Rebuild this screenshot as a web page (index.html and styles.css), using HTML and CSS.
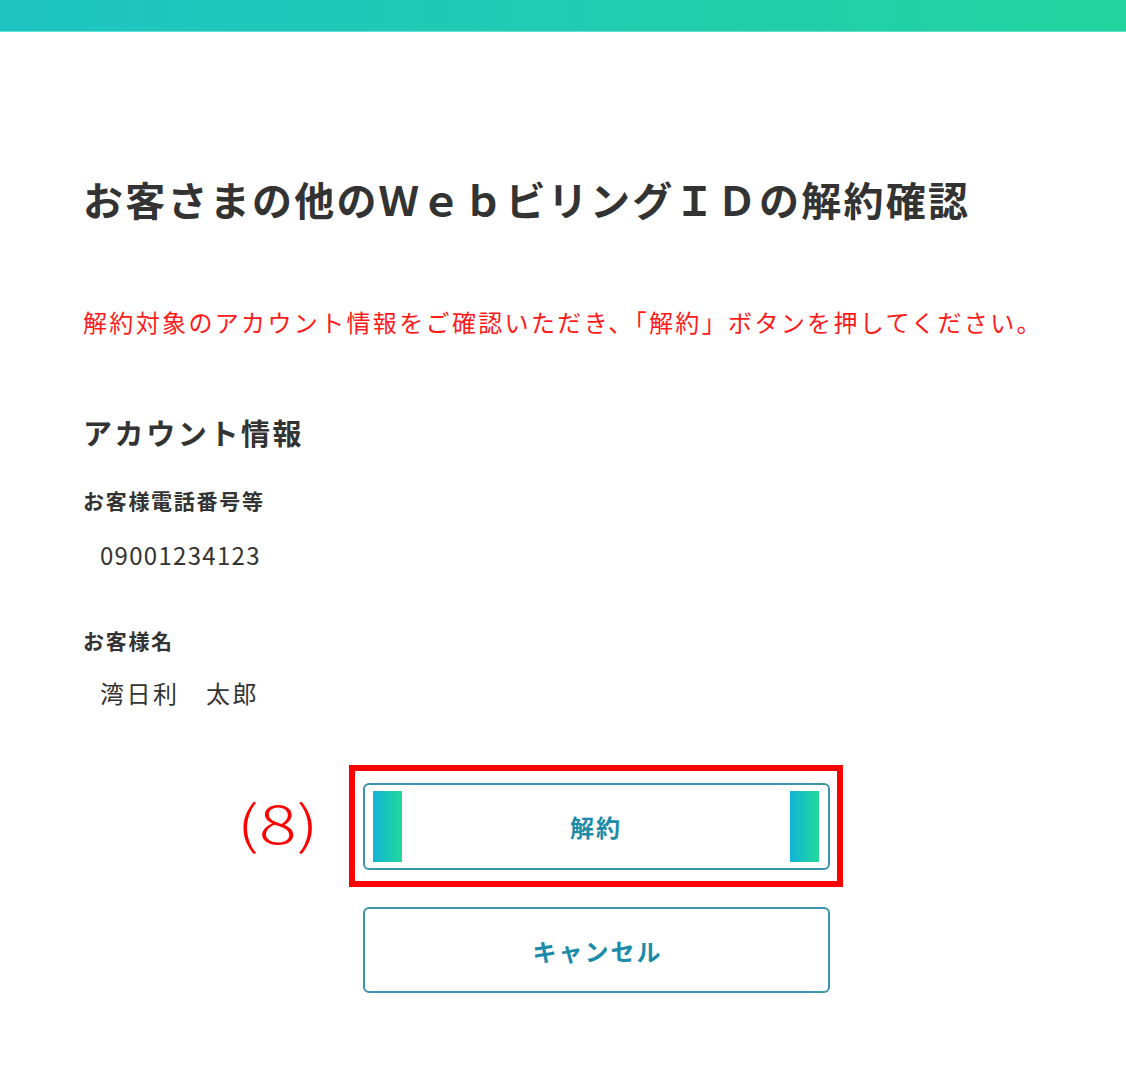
FILE: index.html
```html
<!DOCTYPE html>
<html lang="ja">
<head>
<meta charset="utf-8">
<title>お客さまの他のＷｅｂビリングＩＤの解約確認</title>
<link rel="stylesheet" href="styles.css">
</head>
<body>
<header class="topbar"></header>
<main class="page">
  <h1 class="title">お客さまの他のＷｅｂビリングＩＤの解約確認</h1>
  <p class="notice">解約対象のアカウント情報をご確認いただき、「解約」ボタンを押してください。</p>
  <section class="account">
    <h2 class="account-head">アカウント情報</h2>
    <dl class="fields">
      <dt class="field-label">お客様電話番号等</dt>
      <dd class="field-value field-value-num">09001234123</dd>
      <dt class="field-label field-label-gap">お客様名</dt>
      <dd class="field-value field-value-name">湾日利　太郎</dd>
    </dl>
  </section>
  <div class="actions">
    <div class="primary-wrap">
      <span class="annot-num">(8)</span>
      <button class="btn btn-primary" type="button">
        <span class="bar"></span>
        <span class="btn-label">解約</span>
        <span class="bar"></span>
      </button>
      <span class="annot-box"></span>
    </div>
    <button class="btn btn-cancel" type="button"><span class="btn-label">キャンセル</span></button>
  </div>
</main>
</body>
</html>
```

FILE: styles.css
```css
html, body {
  margin: 0;
  padding: 0;
  background: #ffffff;
}

body {
  font-family: "Noto Sans CJK JP", "Noto Sans", sans-serif;
  color: #333333;
}

.topbar {
  height: 31px;
  background: linear-gradient(90deg, #1dc4c2 0%, #20cdb0 55%, #22d49e 100%);
  border-bottom: 1px solid #5fe2d2;
}

.page {
  padding: 137px 16px 60px 83px;
}

.title {
  margin: 0;
  font-size: 40px;
  line-height: 60px;
  font-weight: 700;
  letter-spacing: 2.25px;
  color: #333333;
}

.notice {
  margin: 75px 0 0;
  font-size: 24px;
  line-height: 36px;
  font-weight: 400;
  letter-spacing: 2.35px;
  color: #ff1a1a;
}

.account {
  margin-top: 70px;
}

.account-head {
  margin: 0;
  font-size: 29px;
  line-height: 44px;
  font-weight: 700;
  letter-spacing: 2.6px;
  color: #333333;
}

.fields {
  margin: 30px 0 0;
  display: flex;
  flex-direction: column;
}

.field-label {
  font-size: 21px;
  line-height: 32px;
  font-weight: 700;
  letter-spacing: 1.7px;
  color: #333333;
}

.field-label-gap {
  margin-top: 51px;
}

.field-value {
  margin: 21px 0 0;
  padding-left: 17px;
  font-size: 24px;
  line-height: 36px;
  font-weight: 400;
  color: #333333;
}

.field-value-num {
  letter-spacing: 1.3px;
}

.field-value-name {
  margin-top: 19px;
  letter-spacing: 2.5px;
}

.actions {
  margin-top: 72px;
  display: flex;
  flex-direction: column;
  align-items: center;
  gap: 37px;
}

.primary-wrap {
  position: relative;
  display: flex;
}

.btn {
  box-sizing: border-box;
  width: 467px;
  background: #ffffff;
  border: 2px solid #3a95ad;
  border-radius: 6px;
  font-family: "Noto Sans CJK JP", "Noto Sans", sans-serif;
  color: #1c8ba8;
  cursor: pointer;
  display: flex;
  align-items: stretch;
}

.btn-primary {
  height: 87px;
  padding: 6px 9px 6px 8px;
}

.btn-cancel {
  height: 86px;
  padding: 0;
  justify-content: center;
  align-items: center;
}

.bar {
  width: 29px;
  flex: none;
  background: linear-gradient(90deg, #12b4d8 0%, #22d99a 100%);
}

.btn-label {
  flex: 1;
  display: flex;
  align-items: center;
  justify-content: center;
  font-size: 24px;
  font-weight: 700;
  letter-spacing: 2px;
}

.btn-cancel .btn-label {
  flex: none;
  padding-left: 2px;
}

.annot-box {
  position: absolute;
  top: -18px;
  bottom: -17px;
  left: -14px;
  right: -13px;
  border: 6px solid #ff0000;
  pointer-events: none;
}

.annot-num {
  position: absolute;
  right: 100%;
  top: 50%;
  margin-right: 44px;
  transform-origin: right center;
  transform: translateY(-58%) scaleX(1.35);
  font-size: 52px;
  line-height: 60px;
  font-weight: 300;
  color: #ff0000;
  white-space: nowrap;
}
```
